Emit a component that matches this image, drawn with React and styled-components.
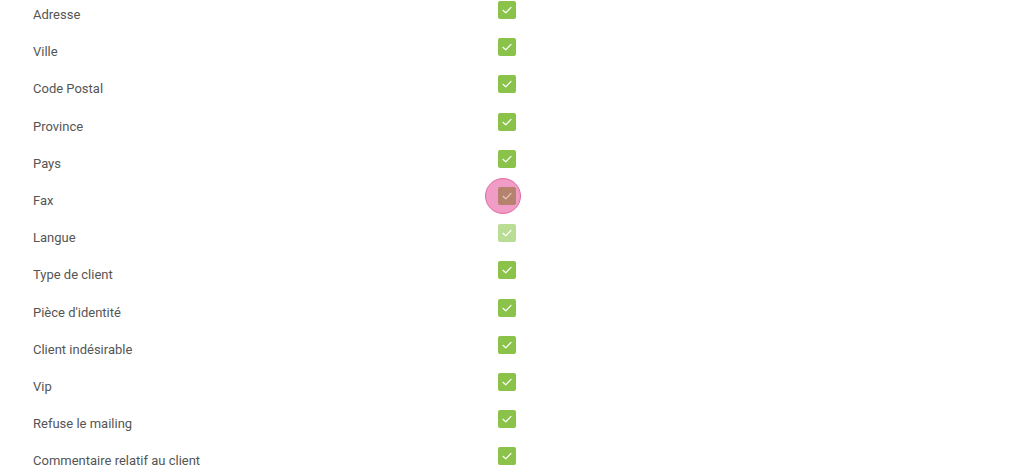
import React from 'react';
import styled, { createGlobalStyle, css } from 'styled-components';

const GlobalStyle = createGlobalStyle`
  html, body {
    margin: 0;
    padding: 0;
    background: #fff;
    font-family: Roboto, "Liberation Sans", Arial, sans-serif;
  }
`;

const List = styled.div`
  display: grid;
  grid-template-columns: 465px 18px;
  grid-auto-rows: 37.2px;
  padding-left: 33px;
  margin-top: 1px;
`;

const Label = styled.div`
  font-size: 13px;
  color: #555;
  line-height: 16px;
  padding-top: 6px;
`;

const Cell = styled.div`
  position: relative;
`;

const Box = styled.span`
  position: relative;
  display: flex;
  align-items: center;
  justify-content: center;
  width: 18px;
  height: 18px;
  border-radius: 2px;
  background: #8bc34a;
  z-index: 1;
  ${({ state }) => state === 'focus' && css`background: #b5836d;`}
  ${({ state }) => state === 'faded' && css`background: #badd96;`}
`;

// pink ripple that sits over the focused box
const Ripple = styled.span`
  position: absolute;
  left: -13px;
  top: -9px;
  width: 34px;
  height: 34px;
  border-radius: 50%;
  background: #f19cc6;
  border: 1px solid #e26b9b;
`;

const rows = [
  ['Adresse'],
  ['Ville'],
  ['Code Postal'],
  ['Province'],
  ['Pays'],
  ['Fax', 'focus'],
  ['Langue', 'faded'],
  ['Type de client'],
  ["Pièce d'identité"],
  ['Client indésirable'],
  ['Vip'],
  ['Refuse le mailing'],
  ['Commentaire relatif au client'],
];

const Check = ({ light }) => (
  <svg width="12" height="12" viewBox="0 0 12 12">
    <path d="M2 6.3 L4.8 8.8 L10 3.4" fill="none" stroke={light ? '#e8c9b8' : '#fff'} strokeWidth="1.2" strokeLinecap="round" strokeLinejoin="round" />
  </svg>
);

export default function App() {
  return (
    <>
      <GlobalStyle />
      <List>
        {rows.map(([label, state]) => (
          <React.Fragment key={label}>
            <Label>{label}</Label>
            <Cell>
              {state === 'focus' && <Ripple />}
              <Box state={state}>
                <Check light={state === 'focus'} />
              </Box>
            </Cell>
          </React.Fragment>
        ))}
      </List>
    </>
  );
}
